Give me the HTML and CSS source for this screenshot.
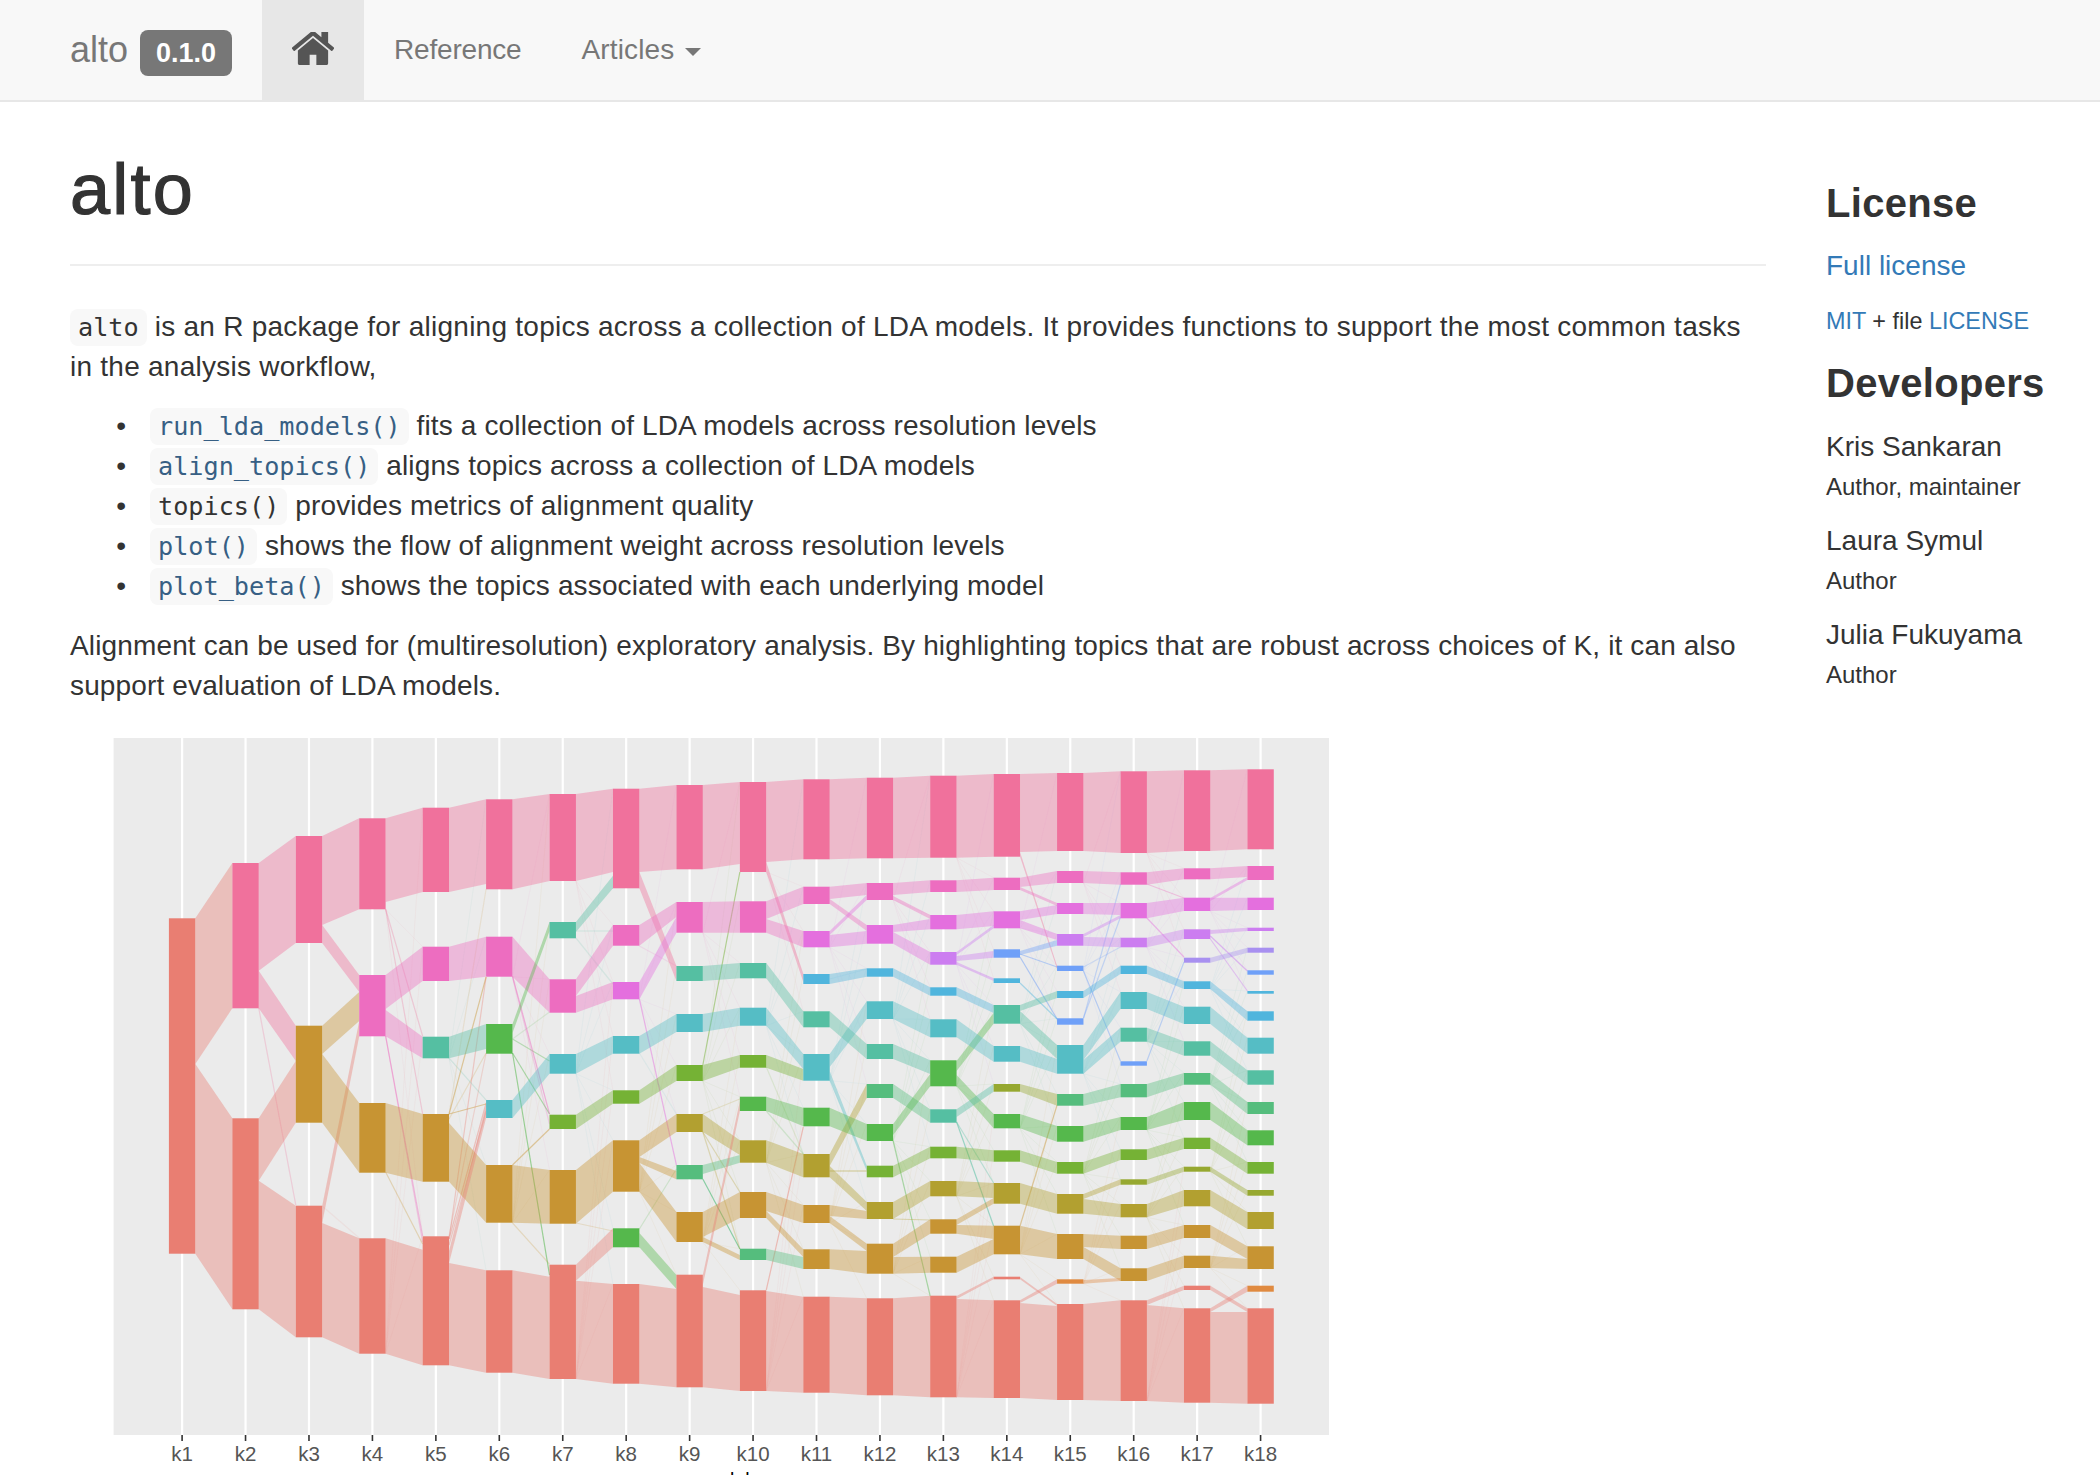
FILE: index.html
```html
<!DOCTYPE html>
<html lang="en">
<head>
<meta charset="utf-8">
<title>alto</title>
<link rel="stylesheet" href="styles.css">
</head>
<body>
<header class="navbar">
  <a class="brand">alto</a>
  <span class="version">0.1.0</span>
  <nav class="nav">
    <a class="nav-link home" aria-label="Home">
      <svg class="home-icon" viewBox="96 288 1600 1248"><path d="M1472 992v480q0 26-19 45t-45 19h-384v-384h-256v384h-384q-26 0-45-19t-19-45v-480q0-1 .5-3t.5-3l575-474 575 474q1 2 1 6zm223-69l-62 74q-8 9-21 11h-3q-13 0-21-7l-692-577-692 577q-12 8-24 7-13-2-21-11l-62-74q-8-10-7-23.5t11-21.5l719-599q32-26 76-26t76 26l244 204v-195q0-14 9-23t23-9h192q14 0 23 9t9 23v408l219 182q10 8 11 21.5t-7 23.5z"/></svg>
    </a>
    <a class="nav-link ref-link">Reference</a>
    <a class="nav-link articles-link">Articles <span class="caret"></span></a>
  </nav>
</header>
<div class="page">
  <main class="content">
    <div class="page-header"><h1>alto</h1></div>
    <p class="lead"><code>alto</code> is an R package for aligning topics across a collection of LDA models. It provides functions to support the most common tasks in the analysis workflow,</p>
    <ul>
      <li><code class="ref">run_lda_models()</code> fits a collection of LDA models across resolution levels</li>
      <li><code class="ref">align_topics()</code> aligns topics across a collection of LDA models</li>
      <li><code>topics()</code> provides metrics of alignment quality</li>
      <li><code class="ref">plot()</code> shows the flow of alignment weight across resolution levels</li>
      <li><code class="ref">plot_beta()</code> shows the topics associated with each underlying model</li>
    </ul>
    <p>Alignment can be used for (multiresolution) exploratory analysis. By highlighting topics that are robust across choices of K, it can also support evaluation of LDA models.</p>
    <svg id="chart" class="chart" viewBox="70 726 1270 750" role="img" aria-label="Alignment flow across k1 to k18"></svg>
  </main>
  <aside class="sidebar">
    <h2>License</h2>
    <p class="license-link"><a>Full license</a></p>
    <p class="small-line license-line"><a>MIT</a> + file <a>LICENSE</a></p>
    <h2 class="dev-title">Developers</h2>
    <div class="dev"><div class="dev-name">Kris Sankaran</div><div class="small-line">Author, maintainer</div></div>
    <div class="dev"><div class="dev-name">Laura Symul</div><div class="small-line">Author</div></div>
    <div class="dev"><div class="dev-name">Julia Fukuyama</div><div class="small-line">Author</div></div>
  </aside>
</div>
<script src="chart.js"></script>
</body>
</html>
```

FILE: styles.css
```css
* { box-sizing: border-box; }
html, body { margin: 0; padding: 0; }
body {
  font-family: "Liberation Sans", Arial, sans-serif;
  font-size: 28px;
  line-height: 40px;
  color: #333;
  background: #fff;
}
.navbar {
  display: flex;
  align-items: flex-start;
  height: 102px;
  padding-left: 70px;
  background: #f8f8f8;
  border-bottom: 2px solid #e7e7e7;
}
.brand {
  font-size: 36px;
  line-height: 40px;
  margin-top: 30px;
  color: #777;
}
.version {
  margin: 30px 30px 0 12px;
  width: 92px;
  height: 46px;
  text-align: center;
  font-size: 27px;
  font-weight: 700;
  line-height: 46px;
  color: #fff;
  background: #777;
  border-radius: 8px;
}
.nav { display: flex; }
.nav-link {
  display: block;
  height: 100px;
  padding: 30px;
  color: #777;
}
.home { width: 102px; padding-top: 32px; background: #e7e7e7; }
.home-icon { display: block; width: 42px; height: 33px; fill: #555; }
.ref-link { letter-spacing: -.2px; }
.articles-link { letter-spacing: .15px; }
.caret {
  display: inline-block;
  margin-left: 3px;
  vertical-align: 3px;
  border-top: 8px solid #777;
  border-left: 8px solid transparent;
  border-right: 8px solid transparent;
}
.page {
  display: grid;
  grid-template-columns: 1696px 1fr;
  column-gap: 60px;
  padding-left: 70px;
}
.page-header {
  margin: 48px 0 41px;
  padding-bottom: 35px;
  border-bottom: 2px solid #eee;
}
h1 {
  margin: 0;
  font-size: 72px;
  line-height: 79px;
  font-weight: 400;
  letter-spacing: 2.2px;
  -webkit-text-stroke: 1.2px #333;
}
.content p, .content li { letter-spacing: .14px; }
.content p { max-width: 1680px; }
.content p.lead { letter-spacing: .25px; }
p { margin: 0 0 19px; }
ul { margin: 0 0 20px; padding: 0 0 0 80px; }
li::marker { content: "\2022\00a0\00a0\00a0"; }
code {
  font-family: "DejaVu Sans Mono", "Liberation Mono", monospace;
  font-size: 25.2px;
  line-height: 1;
  letter-spacing: 0;
  padding: 4px 8px;
  color: #333;
  background: #f8f8f8;
  border-radius: 8px;
}
code.ref { color: #375f84; }
.chart { display: block; width: 1270px; height: 750px; }
.sidebar { padding-top: 79px; }
h2 {
  margin: 0 0 21px;
  font-size: 40px;
  line-height: 44px;
  font-weight: 700;
  letter-spacing: .3px;
}
a { color: inherit; text-decoration: none; }
.sidebar a { color: #337ab7; }
.license-link { margin-bottom: 18px; }
.small-line { margin: 0; font-size: 24px; line-height: 34px; }
.license-line { font-size: 23.4px; }
.dev-title { margin: 23px 0 20px; }
.dev { margin-bottom: 15px; }
.dev-name { line-height: 44px; margin-bottom: 1px; }
```

FILE: chart.js
```javascript
var COL = { s:"#e97e72", p:"#f0719c", m:"#ed6dc0", g:"#c79433", t:"#55bfa2", G:"#55b84c", c:"#55bdc5",
  o:"#75b235", M:"#e46fde", b:"#50b5dd", y:"#b2a030", e:"#55bd7d", u:"#cc7df0", w:"#6fa0f8",
  l:"#a890f0", Y:"#96a830", r:"#e08a40" };

var N = [
 [["s",919.3,1254.7]],
 [["p",864,1009.3],["s",1119.3,1310.3]],
 [["p",837,944],["g",1026.7,1123.7],["s",1206.7,1338.3]],
 [["p",819.3,910.3],["m",976,1037.3],["g",1104,1173.7],["s",1239.3,1354.7]],
 [["p",808.7,893],["m",947.7,982],["t",1037.7,1059.3],["g",1115,1182.7],["s",1237.3,1366.3]],
 [["p",800.3,890.3],["m",937.7,977.7],["G",1025,1054.7],["c",1101,1119],["g",1166,1223.7],["s",1271.3,1373.7]],
 [["p",795,882],["t",923,939.3],["m",980.3,1013.7],["c",1055,1074.7],["o",1115.7,1130],["g",1171,1224.7],["s",1265.7,1380]],
 [["p",789.7,889.3],["m",926,946.7],["M",983,1000.3],["c",1037,1054.7],["o",1091.3,1104.7],["g",1141.3,1192.7],["G",1229.3,1248.3],["s",1285,1384.7]],
 [["p",786,870.3],["m",903,933.7],["t",967,982],["c",1015,1033],["o",1066,1082],["y",1115,1133],["e",1166,1180.3],["g",1213,1243],["s",1275.7,1388.3]],
 [["p",783,873],["m",902.3,933.7],["t",964,979.3],["c",1008.7,1026.7],["o",1056,1068.7],["G",1097.7,1112],["y",1141.3,1163.7],["g",1193,1219],["e",1249.7,1261],["s",1291.3,1392]],
 [["p",780.3,860.3],["m",887.7,905],["M",932,948.3],["b",975,985],["t",1012.3,1028.3],["c",1055,1081.7],["G",1108.7,1127.3],["y",1155,1178.3],["g",1206,1224],["g",1250.3,1270],["s",1297.7,1393.7]],
 [["p",778.7,859.3],["m",884,901],["M",926,944.7],["b",969.3,977.7],["c",1002.3,1020],["t",1045,1060],["e",1085,1099],["G",1125,1142],["o",1166.7,1178.3],["y",1203,1220],["g",1244.7,1274.7],["s",1299.3,1396.3]],
 [["p",776.7,858.7],["m",881.3,893],["M",916,930.3],["u",953,965.7],["b",988.3,996.7],["c",1020.3,1038.3],["G",1061.3,1087.3],["t",1110.3,1123.7],["o",1147.7,1159.3],["y",1182,1197.3],["g",1220.3,1234.7],["g",1257.7,1273.7],["s",1296.7,1398.3]],
 [["p",775,857.7],["m",878.7,891],["M",912.3,929.3],["w",950.3,958.7],["b",979.3,984],["t",1006,1024.7],["c",1047,1062.7],["Y",1085,1092.7],["G",1115,1129.3],["o",1151.3,1162.7],["y",1184,1204.7],["g",1226.7,1255.3],["s",1277.7,1280.3],["s",1301.3,1399]],
 [["p",774,852],["m",872,884],["M",904,915],["u",935,946.7],["w",966.7,972],["b",992,999],["w",1019.3,1025.7],["c",1046,1074.7],["e",1095,1106.7],["G",1127,1142.7],["o",1163,1174.7],["y",1195,1214.7],["g",1235,1260],["r",1280.3,1284.7],["s",1305,1401]],
 [["p",772.3,854],["m",873.3,885.7],["M",904,919.3],["u",938.7,948.3],["b",966.7,975],["c",993,1010],["t",1028.7,1042.7],["w",1062.3,1066.7],["e",1085,1098.3],["G",1118,1131],["o",1150.3,1161],["Y",1180.3,1185.7],["y",1205,1218.3],["g",1236.7,1250],["g",1269.3,1282],["s",1301.3,1402]],
 [["p",771.3,852],["m",869.3,880.3],["M",898.7,912],["u",930.3,940],["l",958.7,963.7],["b",982.3,990],["c",1007.7,1025],["t",1042.3,1056.7],["e",1074,1085.7],["G",1103,1121],["o",1138.7,1150],["Y",1167.7,1172.7],["y",1191,1207.3],["g",1226,1239],["g",1256.7,1269],["s",1286.7,1291],["s",1309.3,1403.7]],
 [["p",770.3,850.3],["m",867,881],["M",898.7,911],["u",928.7,932],["l",948.7,953.7],["w",971.3,975.7],["b",992,994.7],["b",1012.3,1021.7],["c",1038.7,1054.7],["t",1071.3,1085.7],["e",1103,1115],["G",1131.3,1146.3],["o",1163,1174.7],["Y",1191,1196.7],["y",1213,1230],["g",1247.3,1270],["r",1286.7,1292.7],["s",1309.3,1404.7]]
];

/* ribbons per gap: [from, to] or [from, to, fromTop, fromBottom, toTop, toBottom] */
var F = [
 [[0,0,919.3,1065,864,1009.3],[0,1,1065,1254.7,1119.3,1310.3]],
 [[0,0,864,971.7,837,944],[0,1,971.7,1009.3,1026.7,1062],[1,1,1119.3,1181.7,1062,1123.7],[1,2,1181.7,1310.3,1206.7,1338.3]],
 [[0,0,837,926,819.3,910.3],[0,1,926,944,976,993],[1,1,1026.7,1055,993,1022],[2,1,1207,1224,1022,1037.3],[1,2,1055,1123.7,1104,1173.7],[2,3,1224,1338.3,1239.3,1354.7]],
 [[0,0,819.3,903,808.7,893],[1,1,976,1010,947.7,982],[1,2,1011,1037.3,1037.7,1059.3],[2,3],[3,4,1239.3,1354.7,1250.7,1366.3]],
 [[0,0,808.7,893,800.3,885],[1,1],[2,2,1037.7,1059.3,1025,1050],[3,4,1124,1182.7,1166,1223.7],[4,3,1252,1264,1106,1119],[4,5,1264,1366.3,1271.3,1373.7]],
 [[0,0],[1,2],[2,1,1025,1034,923,932],[3,3],[4,5],[5,6,1271.3,1373.7,1277.7,1380]],
 [[0,0,795,882,789.7,873],[1,0,923,933,876.7,889.3],[2,1,980.3,997,926,946.7],[2,2,997,1013.7,983,1000.3],[3,3],[4,4],[5,5],[6,6,1265.7,1281.7,1229.3,1248.3],[6,7,1281.7,1380,1285,1384.7]],
 [[0,0,789.7,873,786,870.3],[0,2,873,889.3,967,982],[1,1,926,946.7,903,918],[2,1,983,1000.3,918,933.7],[3,3],[4,4],[5,5,1141.3,1158,1115,1133],[5,6,1158,1164,1172,1180.3],[5,7,1164,1192.7,1213,1243],[6,8,1234,1248.3,1276,1290],[7,8,1285,1384.7,1290,1388.3]],
 [[0,0,786,870.3,783,865],[1,1],[2,2],[3,3],[4,4],[5,6,1115,1133,1141.3,1156],[6,6,1166,1175,1156,1163.7],[7,7,1213,1238,1193,1219],[7,8,1238,1243,1256,1261],[8,5,1276,1286,1102,1112],[8,9,1288,1388.3,1296,1392]],
 [[0,0,783,863,780.3,860.3],[0,3,863,873,975,983],[1,1,902.3,920,887.7,905],[1,2,920,933.7,932,948.3],[2,4],[3,5,1008.7,1026.7,1055,1070],[4,5,1056,1068.7,1070,1081.7],[5,6],[6,7],[7,8,1193,1212,1206,1224],[7,9,1212,1219,1250.3,1258],[8,9,1249.7,1261,1258,1270],[9,10,1292,1392,1297.7,1393.7]],
 [[0,0],[1,1,887.7,900,884,896],[1,2,900,905,926,932],[2,1,932,936,896,901],[2,2,936,948.3,932,944.7],[3,3],[5,4,1055,1068,1002.3,1020],[4,5],[5,8,1072,1081.7,1166.7,1172],[7,6,1155,1167,1085,1099],[6,7],[7,9,1167,1178.3,1203,1212],[8,9,1206,1217,1212,1220],[8,10,1217,1224,1244.7,1252],[9,10,1250.3,1270,1252,1274.7],[10,11]],
 [[0,0],[1,1,884,896,881.3,893],[1,2,897,901,916,920],[2,2,926,933,920,930.3],[2,3,933,944.7,953,965.7],[3,4],[4,5],[5,6,1045,1060,1061.3,1075],[6,7],[7,6,1125,1136,1075,1087.3],[8,8],[9,9],[10,10,1244.7,1258,1220.3,1234.7],[10,11,1258,1274.7,1257.7,1273.7],[11,12]],
 [[0,0],[1,1],[2,2,916,930.3,912.3,927],[3,2,953,956,926,929.3],[3,3,957,962,952,958.7],[3,4,963,965.7,979.3,982],[4,5,988.3,996.7,1006,1014],[6,5,1062,1072,1014,1024.7],[5,6],[6,8,1076,1087.3,1115,1129.3],[7,7,1110.3,1118,1085,1092.7],[8,9],[9,10,1182,1197.3,1184,1199],[10,10,1220.3,1226,1199,1204.7],[10,11,1226,1234.7,1226.7,1240],[11,11,1257.7,1273.7,1240,1255.3],[12,12,1297,1300,1277.7,1280.3],[12,13,1300,1398.3,1301.3,1399]],
 [[0,0,775,853,774,852],[0,4,853,857.7,966.7,970],[1,1,878.7,888,872,884],[1,2,888,891,904,907],[2,2,912.3,921,906,915],[2,3,921,929.3,935,941],[3,3,952,956,941,946.7],[5,5,1006,1012,992,999],[5,7,1012,1024.7,1046,1060],[6,7,1047,1062.7,1060,1074.7],[7,8],[8,9],[9,10],[10,11],[11,12],[12,14,1278,1280.3,1305,1307],[13,13,1301.3,1304,1280.3,1284.7],[13,14,1304,1399,1307,1401]],
 [[0,0],[1,1],[2,2,904,915,904,916],[3,2,935,938,916,919.3],[3,3,938,946.7,938.7,948.3],[5,4],[7,5,1046,1061,993,1010],[7,6,1061,1074.7,1028.7,1042.7],[8,8],[9,9],[10,10],[11,11,1195,1200,1180.3,1185.7],[11,12,1200,1214.7,1205,1218.3],[12,13,1235,1248,1236.7,1250],[12,14,1248,1260,1269.3,1282],[13,14,1281,1284.7,1279,1282],[14,15]],
 [[0,0],[1,1],[2,2],[3,3],[4,5],[5,6],[6,7],[8,8],[9,9],[10,10],[11,11],[12,12],[13,13],[14,14],[15,15,1301.3,1306,1286.7,1291],[15,16,1306,1402,1309.3,1403.7]],
 [[0,0],[1,1,869.3,880.3,867,878],[2,2],[2,1,899,902,878,881],[3,3,931,935,928.7,932],[4,4],[5,7],[6,8],[7,9],[8,10],[9,11],[10,12],[11,13],[12,14],[13,15,1226,1239,1247.3,1260],[14,15,1256.7,1269,1260,1270],[15,17,1286.7,1291,1309.3,1313],[16,16,1309.3,1313,1286.7,1292.7],[16,17,1313,1403.7,1313,1404.7]]
];

/* thin links per gap: [from, to, fromY, toY, opacity] */
var T = [
 [],
 [[0,2,1009,1206,.25]],
 [[2,2,1207,1239,.1]],
 [[0,2,910,1037,.25],[0,3,910,1115,.25],[1,4,1037,1237,.4],[1,4,1037,1243,.3],[2,4,1173,1245,.3]],
 [[3,3,1115,1105,.45],[3,2,1120,1054,.2],[3,1,1115,978,.45],[4,2,1237,1054,.25],[4,1,1240,978,.35],[4,3,1240,1104,.4],[4,3,1246,1112,.35],[2,3,1059,1101,.15],[3,0,1115,890,.15]],
 [[4,4,1166,1130,.45],[2,6,1054,1276,.55],[2,3,1040,1062,.35],[2,4,1054,1115,.45],[2,2,1040,1013,.15],[4,6,1224,1265,.2],[1,4,977,1115,.45],[1,4,978,1125,.25]],
 [[1,1,932,932,.2],[1,2,939,985,.15],[5,6,1224,1232,.2]],
 [[2,6,1000,1166,.45],[6,6,1230,1170,.2],[1,2,947,967,.15],[3,5,1054,1115,.1]],
 [[4,0,1066,873,.5],[6,8,1180,1250,.65],[5,7,1133,1193,.3],[5,8,1133,1250,.3],[5,5,1115,1100,.2]],
 [[9,6,1291,1128,.45],[5,7,1112,1155,.2],[4,7,1068,1155,.15]],
 [[7,8,1172,1172,.5],[3,2,980,970,.1]],
 [[7,12,1142,1297,.45],[9,10,1220,1221,.35]],
 [[7,11,1123,1227,.55],[7,10,1123,1184,.35]],
 [[3,4,955,968,.45],[3,6,958,1020,.5],[4,6,984,1020,.45],[11,8,1227,1106,.45]],
 [[6,1,1019.3,885,.35],[6,2,1019,918,.35],[4,7,972,1062,.4],[4,3,968,948,.25]],
 [[2,4,919,958,.45],[7,4,1062,963,.4],[1,2,885,899,.35]],
 [[3,5,937,972,.5],[3,6,940,992,.4]]
];

var NS = "http://www.w3.org/2000/svg";
var chart = document.getElementById("chart");
function el(parent, tag, attrs, text) {
  var e = document.createElementNS(NS, tag);
  for (var k in attrs) e.setAttribute(k, attrs[k]);
  if (text) e.textContent = text;
  parent.appendChild(e);
  return e;
}
var X0 = 182.1, DX = 63.44, HW = 13.2, TOP = 739, BOT = 1436;
function cx(i) { return X0 + DX * i; }

el(chart, "rect", { x: 113.6, y: TOP, width: 1215.4, height: BOT - TOP, fill: "#ebebeb" });
N.forEach(function (col, i) {
  var x = cx(i);
  el(chart, "line", { x1: x, x2: x, y1: TOP, y2: BOT, stroke: "#fff", "stroke-width": 2.2 });
  el(chart, "line", { x1: x, x2: x, y1: BOT, y2: BOT + 6, stroke: "#333", "stroke-width": 1.6 });
  el(chart, "text", { x: x, y: 1462, "text-anchor": "middle", fill: "#555",
    "font-family": "Liberation Sans, sans-serif", "font-size": 20.5 }, "k" + (i + 1));
});
el(chart, "text", { x: 723, y: 1488, "text-anchor": "middle", fill: "#000",
  "font-family": "Liberation Sans, sans-serif", "font-size": 19.5 }, "model");

var art = el(chart, "g", { style: "filter:blur(.45px)" });

/* very faint background links */
N.forEach(function (col, i) {
  if (i < 3 || i === N.length - 1) return;
  var next = N[i + 1];
  col.forEach(function (a, ai) {
    next.forEach(function (b, bi) {
      var d = Math.abs(ai - bi);
      if (d === 0 || d > 4 || (ai * 7 + bi * 3 + i) % 3 !== 0) return;
      el(art, "line", { x1: cx(i) + HW, y1: a[2], x2: cx(i + 1) - HW, y2: b[1],
        stroke: COL[a[0]], "stroke-width": 1, "stroke-opacity": .06 });
    });
  });
});
T.forEach(function (gap, i) {
  gap.forEach(function (t) {
    el(art, "line", { x1: cx(i) + HW, y1: t[2], x2: cx(i + 1) - HW, y2: t[3],
      stroke: COL[N[i][t[0]][0]], "stroke-width": 1.2, "stroke-opacity": t[4] });
  });
});
F.forEach(function (gap, i) {
  gap.forEach(function (f) {
    var a = N[i][f[0]], b = N[i + 1][f[1]];
    var a0 = f.length > 2 ? f[2] : a[1], a1 = f.length > 2 ? f[3] : a[2];
    var b0 = f.length > 2 ? f[4] : b[1], b1 = f.length > 2 ? f[5] : b[2];
    var l = cx(i) + HW, r = cx(i + 1) - HW;
    el(art, "polygon", { points: l + "," + a0 + " " + r + "," + b0 + " " + r + "," + b1 + " " + l + "," + a1,
      fill: COL[a[0]], "fill-opacity": .4 });
  });
});
N.forEach(function (col, i) {
  col.forEach(function (n) {
    el(art, "rect", { x: cx(i) - HW, y: n[1], width: HW * 2, height: n[2] - n[1], fill: COL[n[0]] });
  });
});
```
